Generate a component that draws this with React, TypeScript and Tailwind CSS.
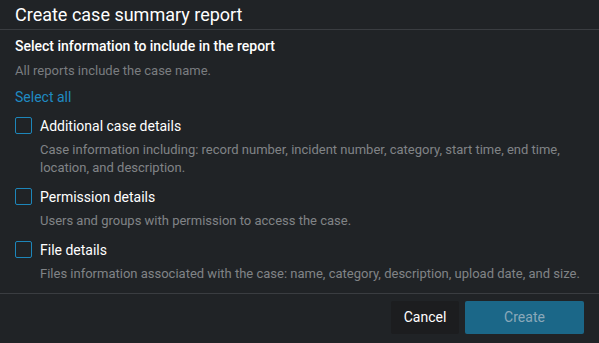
import React from 'react'

interface ReportOption {
  id: string
  label: string
  description: string
}

const options: ReportOption[] = [
  {
    id: 'case',
    label: 'Additional case details',
    description:
      'Case information including: record number, incident number, category, start time, end time, location, and description.',
  },
  {
    id: 'permission',
    label: 'Permission details',
    description: 'Users and groups with permission to access the case.',
  },
  {
    id: 'file',
    label: 'File details',
    description:
      'Files information associated with the case: name, category, description, upload date, and size.',
  },
]

function OptionRow({ option }: { option: ReportOption }) {
  return (
    <div>
      <label className="flex items-start gap-[8px] h-[20px] cursor-pointer">
        <span className="mt-[1px] w-[17px] h-[17px] shrink-0 border-[1.5px] border-[#1d86ba] rounded-[2px]" />
        <span className="text-[14px] text-white leading-[20px]">{option.label}</span>
      </label>
      <p className="pl-[25px] mt-[5px] text-[13px] leading-[18px] text-[#808386]">
        {option.description}
      </p>
    </div>
  )
}

export default function App() {
  return (
    <div className="w-[599px] h-[343px] bg-[#202326] font-['Roboto',sans-serif] flex flex-col">
      <div className="h-[30px] shrink-0 px-[15px] flex items-center border-b border-[#3a3d41]">
        <h1 className="text-[18px] leading-[22px] text-white">Create case summary report</h1>
      </div>

      <div className="h-[263px] shrink-0 px-[15px] pt-[6px]">
        <h2 className="text-[14px] leading-[20px] text-white font-medium">
          Select information to include in the report
        </h2>
        <p className="mt-[6px] text-[13px] leading-[18px] text-[#7a7d80]">
          All reports include the case name.
        </p>
        <button className="block mt-[7px] text-[14px] leading-[20px] text-[#1f8ac2]">Select all</button>
        <div className="mt-[9px] flex flex-col gap-[10px]">
          {options.map((option) => (
            <OptionRow key={option.id} option={option} />
          ))}
        </div>
      </div>

      <div className="flex-1 border-t border-[#3a3d41] flex items-start justify-end gap-[6px] pt-[7px] px-[15px]">
        <button className="h-[33px] w-[68px] bg-[#1c1d1f] text-white text-[14px] rounded-[2px]">
          Cancel
        </button>
        <button className="h-[33px] w-[119px] bg-[#1b6788] text-[#8ba9ba] text-[14px] rounded-[2px]">
          Create
        </button>
      </div>
    </div>
  )
}
